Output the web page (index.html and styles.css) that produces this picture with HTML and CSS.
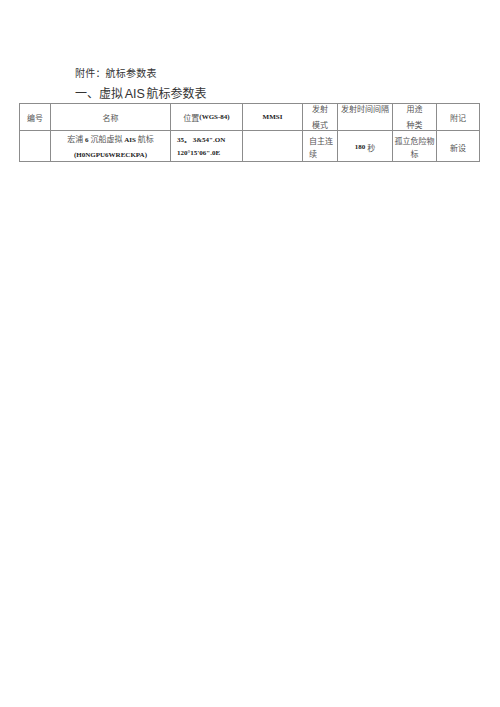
FILE: index.html
```html
<!DOCTYPE html>
<html lang="zh">
<head>
<meta charset="utf-8">
<title>航标参数表</title>
<link rel="stylesheet" href="styles.css">
</head>
<body>
<div class="page">
  <div class="heads">
    <div class="h1">附件：航标参数表</div>
    <div class="h2">一、虚拟 <span class="lat">AIS</span> 航标参数表</div>
  </div>
  <div class="grid">
    <div class="c mid">编号</div>
    <div class="c mid">名称</div>
    <div class="c mid">位置<span class="b">(WGS-84)</span></div>
    <div class="c mid"><span class="b">MMSI</span></div>
    <div class="c top"><div class="l16">发射<br>模式</div></div>
    <div class="c top"><div class="l16">发射时间间隔</div></div>
    <div class="c top"><div class="l16">用途<br>种类</div></div>
    <div class="c mid">附记</div>

    <div class="c mid"></div>
    <div class="c mid body"><div class="l13">宏浦 <span class="b">6</span> 沉船虚拟 <span class="b">AIS</span> 航标<br><span class="b">(H0NGPU6WRECKPA)</span></div></div>
    <div class="c left body"><div class="l13 b">35。 3&amp;54".ON<br>120°15'06".0E</div></div>
    <div class="c mid body"></div>
    <div class="c left body pad6"><div class="l13">自主连<br>续</div></div>
    <div class="c mid body"><span class="b">180</span>&nbsp;秒</div>
    <div class="c mid body"><div class="l13">孤立危险物<br>标</div></div>
    <div class="c mid body">新设</div>
  </div>
</div>
</body>
</html>
```
FILE: styles.css
```css
html, body {
  margin: 0;
  padding: 0;
  background: #ffffff;
}

body {
  font-family: "Noto Sans CJK SC", "Liberation Serif", serif;
  color: #333333;
}

.page {
  width: 500px;
  height: 707px;
  padding-top: 63px;
  box-sizing: border-box;
}

.heads {
  margin-left: 75px;
}

.h1 {
  font-size: 10px;
  line-height: 20px;
  height: 20px;
  color: #333333;
  letter-spacing: 0.2px;
}

.h2 {
  font-size: 12px;
  line-height: 20px;
  height: 20px;
  color: #333333;
  word-spacing: -1px;
}

.h2 .lat {
  font-family: "Liberation Sans", sans-serif;
  font-size: 12.5px;
}

.grid {
  margin-left: 19px;
  width: max-content;
  display: grid;
  grid-template-columns: 30px 119px 71px 59px 34px 54px 43px 42px;
  grid-template-rows: 26px 30px;
  gap: 1px;
  padding: 1px;
  background: #8c8c8c;
}

.c {
  background: #ffffff;
  font-size: 8px;
  display: flex;
  justify-content: center;
  align-items: center;
  text-align: center;
  white-space: nowrap;
  color: #555555;
}

.c.top {
  align-items: flex-start;
}

.c.left {
  justify-content: flex-start;
  text-align: left;
  padding-left: 6px;
}

.c.pad6 {
  padding-left: 6px;
}

.c.body {
  padding-top: 2px;
  box-sizing: border-box;
}

.l16 {
  line-height: 16px;
  margin-top: -3px;
}

.l13 {
  line-height: 13px;
}

.b {
  font-family: "Liberation Serif", serif;
  font-weight: bold;
  font-size: 7px;
  color: #222222;
}
```
